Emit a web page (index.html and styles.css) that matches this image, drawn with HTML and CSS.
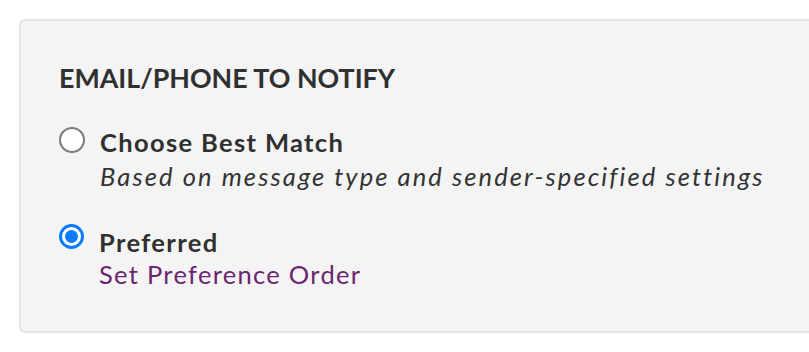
FILE: index.html
```html
<!DOCTYPE html>
<html>
<head>
<meta charset="utf-8">
<link rel="stylesheet" href="styles.css">
</head>
<body>
<div class="panel">
  <h2 class="title">EMAIL/PHONE TO NOTIFY</h2>
  <div class="option">
    <span class="radio"></span>
    <div class="text">
      <div class="label">Choose Best Match</div>
      <div class="desc">Based on message type and sender-specified settings</div>
    </div>
  </div>
  <div class="option">
    <span class="radio checked"></span>
    <div class="text">
      <div class="label">Preferred</div>
      <a class="link">Set Preference Order</a>
    </div>
  </div>
</div>
</body>
</html>
```
FILE: styles.css
```css
html, body { margin: 0; padding: 0; background: #fff; }
body { width: 809px; height: 352px; overflow: hidden; font-family: Lato, "Open Sans", sans-serif; color: #333; }
.panel {
  margin: 19px 0 0 19px;
  width: 820px;
  height: 314px;
  box-sizing: border-box;
  background: #f4f4f4;
  border: 2px solid #e3e3e3;
  border-radius: 6px;
  padding: 41px 0 0 38px;
}
.title { margin: 0 0 32px; font-size: 26.8px; font-weight: 700; line-height: 32px; color: #303030; }
.option { display: flex; align-items: flex-start; gap: 15px; margin-bottom: 31px; }
.radio {
  width: 26px; height: 26px; border: 2px solid #7a7a7a; border-radius: 50%;
  background: #fff; box-sizing: border-box; margin-top: 1px; flex: none; position: relative;
}
.radio.checked { border: 3px solid #0a7aff; width: 25px; height: 25px; margin-top: -2px; }
.radio.checked::after {
  content: ""; position: absolute; left: 3px; top: 3px; width: 13px; height: 13px; border-radius: 50%; background: #0a7aff;
}
.label { font-size: 25.5px; font-weight: 700; line-height: 32px; letter-spacing: 1.35px; color: #303030; }
.desc { font-size: 25.5px; font-style: italic; line-height: 37px; letter-spacing: 2.1px; color: #333; }
.link { font-size: 25.5px; color: #6a2470; line-height: 32px; letter-spacing: 1.3px; display: block; }
```
